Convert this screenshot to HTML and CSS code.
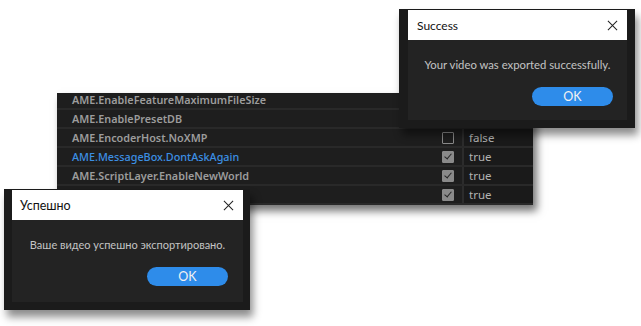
FILE: index.html
```html
<!DOCTYPE html>
<html lang="en">
<head>
  <meta charset="UTF-8">
  <meta name="viewport" content="width=device-width, initial-scale=1.0">
  <title>Export dialogs</title>
  <link rel="stylesheet" href="styles.css">
</head>
<body>
  <!-- Таблица настроек -->
  <div class="prefs">
    <div class="prefs-inner">
      <div class="row">
        <span class="key">AME.EnableFeatureMaximumFileSize</span>
        <span class="check"></span>
        <span class="val"></span>
      </div>
      <div class="row">
        <span class="key">AME.EnablePresetDB</span>
        <span class="check"></span>
        <span class="val"></span>
      </div>
      <div class="row">
        <span class="key">AME.EncoderHost.NoXMP</span>
        <span class="check"><i class="box"></i></span>
        <span class="val">false</span>
      </div>
      <div class="row">
        <span class="key key-active">AME.MessageBox.DontAskAgain</span>
        <span class="check"><i class="box checked"></i></span>
        <span class="val">true</span>
      </div>
      <div class="row">
        <span class="key">AME.ScriptLayer.EnableNewWorld</span>
        <span class="check"><i class="box checked"></i></span>
        <span class="val">true</span>
      </div>
      <div class="row">
        <span class="key">AME.ScriptLayer.EnableNewWorld</span>
        <span class="check"><i class="box checked"></i></span>
        <span class="val">true</span>
      </div>
    </div>
  </div>

  <!-- Диалог (английский) -->
  <div class="dialog dialog-en">
    <div class="dialog-title">
      <span>Success</span>
      <svg class="close" width="12" height="12" viewBox="0 0 12 12"><path d="M1 1 L11 11 M11 1 L1 11" stroke="#222" stroke-width="1.1" fill="none"/></svg>
    </div>
    <div class="dialog-body">
      <p class="msg">Your video was exported successfully.</p>
      <div class="actions"><button class="ok">OK</button></div>
    </div>
  </div>

  <!-- Диалог (русский) -->
  <div class="dialog dialog-ru">
    <div class="dialog-title">
      <span>Успешно</span>
      <svg class="close" width="12" height="12" viewBox="0 0 12 12"><path d="M1 1 L11 11 M11 1 L1 11" stroke="#222" stroke-width="1.1" fill="none"/></svg>
    </div>
    <div class="dialog-body">
      <p class="msg">Ваше видео успешно экспортировано.</p>
      <div class="actions"><button class="ok">OK</button></div>
    </div>
  </div>
</body>
</html>
```

FILE: styles.css
```css
/* Базовые стили */
body {
  margin: 0;
  background: #fff;
  font-family: Lato, "Noto Sans", sans-serif;
  width: 641px;
  height: 326px;
  position: relative;
  overflow: hidden;
}

/* Таблица */
.prefs {
  position: absolute;
  left: 57px;
  top: 93px;
  width: 476px;
  height: 112px;
  overflow: hidden;
  background: #1e1e1e;
  box-shadow: 4px 6px 8px rgba(0, 0, 0, .55);
}

.prefs-inner {
  margin-top: -2px;
}

.row {
  display: grid;
  grid-template-columns: 378px 27px 71px;
  height: 19px;
  box-sizing: border-box;
  border-bottom: 2px solid #292929;
  background: #1e1e1e;
}

.key {
  padding-left: 15px;
  font-family: "Noto Sans", sans-serif;
  font-size: 10.8px;
  font-weight: 600;
  line-height: 17px;
  color: #9c9c9c;
  white-space: nowrap;
}

.key-active {
  color: #3c8fe3;
  font-weight: 500;
}

.check {
  display: flex;
  align-items: center;
  padding-left: 7px;
}

.box {
  width: 12px;
  height: 12px;
  box-sizing: border-box;
  border: 1.5px solid #8a8a8a;
  border-radius: 1px;
}

.box.checked {
  background: #8a8a8a;
  position: relative;
}

.box.checked::after {
  content: "";
  position: absolute;
  left: 3px;
  top: 0;
  width: 3px;
  height: 6px;
  border-right: 1.5px solid #262626;
  border-bottom: 1.5px solid #262626;
  transform: rotate(40deg);
}

.val {
  background: #1a1a1a;
  border-left: 2px solid #2c2c2c;
  padding-left: 5px;
  font-family: "Noto Sans", sans-serif;
  font-size: 11.5px;
  line-height: 17px;
  color: #b2b2b2;
}

/* Диалоги */
.dialog {
  position: absolute;
  background: #1b1b1b;
  box-shadow: 3px 7px 8px rgba(0, 0, 0, .45);
}

.dialog-en {
  left: 399px;
  top: 9px;
  padding: 1px 8px 8px 9px;
  width: 219px;
}

.dialog-ru {
  left: 4px;
  top: 189px;
  padding: 1px 7px 8px 8px;
  width: 231px;
}

.dialog-title {
  height: 30px;
  background: #fff;
  display: flex;
  align-items: center;
  justify-content: space-between;
  padding: 0 9px;
  font-size: 12px;
  color: #111;
}

.dialog-ru .dialog-title {
  padding-left: 8px;
  font-size: 12.5px;
}

.close {
  width: 11px;
  height: 11px;
}

.dialog-body {
  background: #232323;
  height: 80px;
  padding-top: 17px;
  box-sizing: border-box;
}

.dialog-ru .dialog-body {
  height: 82px;
}

.msg {
  margin: 0;
  text-align: center;
  font-size: 11.3px;
  line-height: 16px;
  color: #c4c4c4;
}

.dialog-ru .msg {
  font-size: 11px;
}

.actions {
  display: flex;
  justify-content: flex-end;
  margin-top: 14px;
  padding-right: 14px;
}

.dialog-ru .actions {
  padding-right: 15px;
}

.ok {
  width: 81px;
  height: 19px;
  border: none;
  border-radius: 10px;
  background: #2e8cea;
  color: #f2f2f2;
  font-family: inherit;
  font-size: 12.5px;
  padding: 0;
}
```
